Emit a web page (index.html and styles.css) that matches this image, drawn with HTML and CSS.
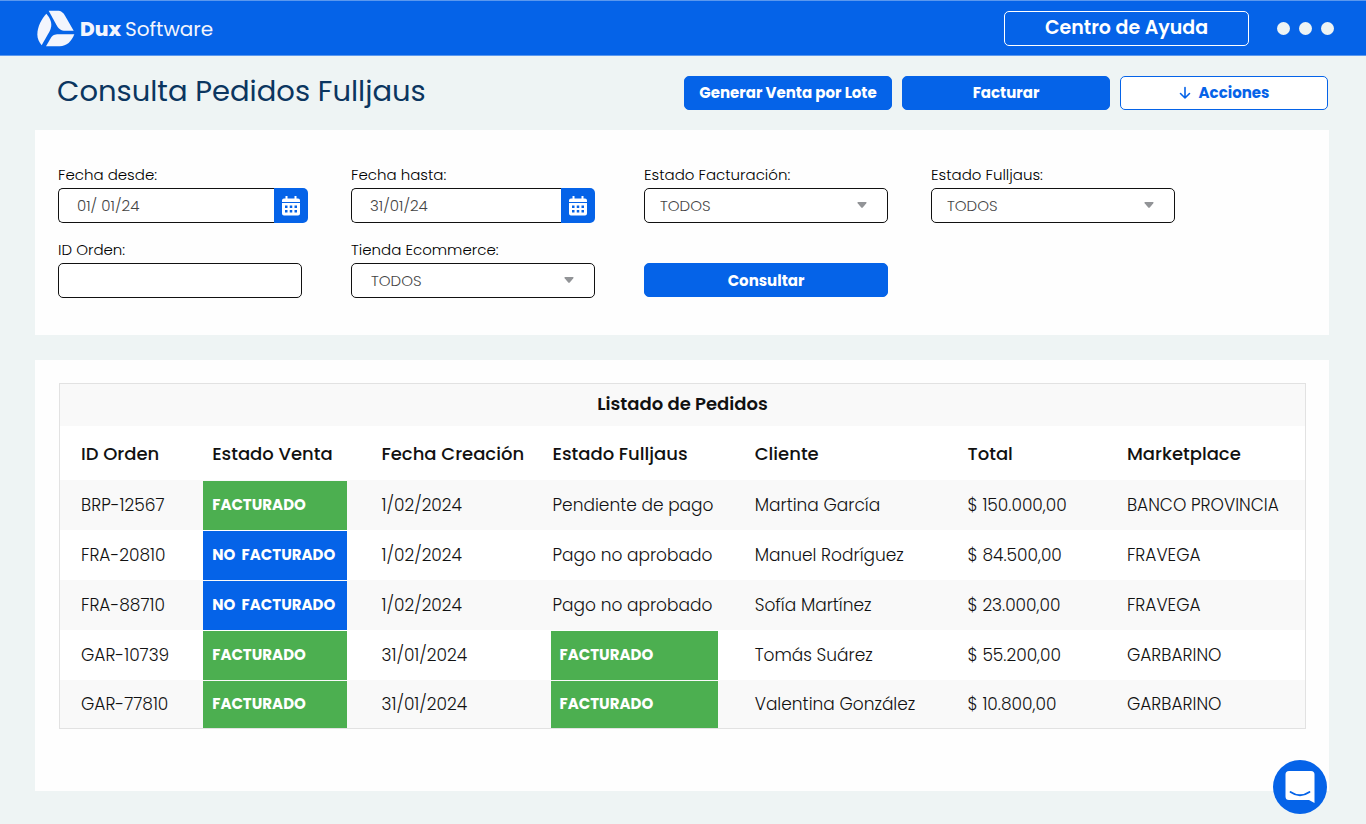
FILE: index.html
```html
<!DOCTYPE html>
<html lang="es">
<head>
<meta charset="utf-8">
<meta name="viewport" content="width=device-width, initial-scale=1">
<title>Consulta Pedidos Fulljaus</title>
<link rel="stylesheet" href="styles.css">
</head>
<body>
<header class="topbar">
  <a class="brand" href="#" aria-label="Dux Software">
    <svg class="brand-mark" viewBox="110 28 114 110" aria-hidden="true">
      <path d="M138 39C152 55 158 72 148 91L124 133C116 124 111 113 111 101C111 78 124 54 138 39Z"/>
      <path d="M145 30H171C183 30 189 36 195 46L220 90H196C181 90 175 84 168 72Z"/>
      <path d="M222 100C214 121 199 136 178 136H137L151 112C157 102 163 100 174 100Z"/>
    </svg>
    <span class="brand-name"><strong>Dux</strong><span>Software</span></span>
  </a>
  <div class="topbar-actions">
    <button class="help" type="button">Centro de Ayuda</button>
    <button class="more" type="button" aria-label="Más opciones"><i></i><i></i><i></i></button>
  </div>
</header>
<main class="page">
  <div class="page-head">
    <h1>Consulta Pedidos Fulljaus</h1>
    <div class="page-actions">
      <button class="btn" type="button">Generar Venta por Lote</button>
      <button class="btn" type="button">Facturar</button>
      <button class="btn btn-outline" type="button">
        <svg class="arrow" viewBox="0 0 12 14" aria-hidden="true"><path d="M6 1.5V12M1.5 7.5L6 12L10.500 7.500"/></svg>
        Acciones
      </button>
    </div>
  </div>

  <form class="card filters">
    <div class="field">
      <label for="desde">Fecha desde:</label>
      <div class="date">
        <input id="desde" type="text" value="01/ 01/24">
        <button type="button" aria-label="Elegir fecha desde"><svg viewBox="0 0 18 20" aria-hidden="true"><path class="solid" d="M3.500 0h2v2.500h7V0h2v2.500H16a2 2 0 0 1 2 2V6H0V4.500a2 2 0 0 1 2-2h1.500zM0 7h18v10.500a2 2 0 0 1-2 2H2a2 2 0 0 1-2-2z"/><path class="holes" d="M3 9.500h2.500V12H3zM7.750 9.500h2.500V12h-2.500zM12.500 9.500H15V12h-2.500zM3 14h2.500v2.500H3zM7.750 14h2.500v2.500h-2.500zM12.500 14H15v2.500h-2.500z"/></svg></button>
      </div>
    </div>
    <div class="field narrow">
      <label for="hasta">Fecha hasta:</label>
      <div class="date">
        <input id="hasta" type="text" value="31/01/24">
        <button type="button" aria-label="Elegir fecha hasta"><svg viewBox="0 0 18 20" aria-hidden="true"><path class="solid" d="M3.500 0h2v2.500h7V0h2v2.500H16a2 2 0 0 1 2 2V6H0V4.500a2 2 0 0 1 2-2h1.500zM0 7h18v10.500a2 2 0 0 1-2 2H2a2 2 0 0 1-2-2z"/><path class="holes" d="M3 9.500h2.500V12H3zM7.750 9.500h2.500V12h-2.500zM12.500 9.500H15V12h-2.500zM3 14h2.500v2.500H3zM7.750 14h2.500v2.500h-2.500zM12.500 14H15v2.500h-2.500z"/></svg></button>
      </div>
    </div>
    <div class="field">
      <label for="facturacion">Estado Facturación:</label>
      <div class="select">
        <select id="facturacion"><option>TODOS</option></select>
        <svg viewBox="0 0 10 6" aria-hidden="true"><path d="M1 0h8q1 .3.300 1.200L5.800 5.400q-.8.800-1.600 0L.7 1.200Q0 .3 1 0z"/></svg>
      </div>
    </div>
    <div class="field">
      <label for="fulljaus">Estado Fulljaus:</label>
      <div class="select">
        <select id="fulljaus"><option>TODOS</option></select>
        <svg viewBox="0 0 10 6" aria-hidden="true"><path d="M1 0h8q1 .3.300 1.200L5.800 5.400q-.8.800-1.600 0L.7 1.200Q0 .3 1 0z"/></svg>
      </div>
    </div>
    <div class="field narrow">
      <label for="orden">ID Orden:</label>
      <input id="orden" type="text">
    </div>
    <div class="field narrow">
      <label for="tienda">Tienda Ecommerce:</label>
      <div class="select wide-inset">
        <select id="tienda"><option>TODOS</option></select>
        <svg viewBox="0 0 10 6" aria-hidden="true"><path d="M1 0h8q1 .3.300 1.200L5.800 5.400q-.8.800-1.600 0L.7 1.200Q0 .3 1 0z"/></svg>
      </div>
    </div>
    <button class="btn submit" type="submit">Consultar</button>
  </form>

  <section class="card listing">
    <table>
      <colgroup><col class="c-id"><col class="c-sale"><col class="c-date"><col class="c-state"><col class="c-client"><col class="c-total"><col class="c-market"></colgroup>
      <thead>
        <tr class="table-title"><th colspan="7">Listado de Pedidos</th></tr>
        <tr class="table-head">
          <th scope="col">ID Orden</th><th scope="col">Estado Venta</th><th scope="col">Fecha Creación</th><th scope="col">Estado Fulljaus</th><th scope="col">Cliente</th><th scope="col">Total</th><th scope="col">Marketplace</th>
        </tr>
      </thead>
      <tbody>
        <tr><td>BRP-12567</td><td><span class="tag done">FACTURADO</span></td><td>1/02/2024</td><td>Pendiente de pago</td><td>Martina García</td><td>$ 150.000,00</td><td>BANCO PROVINCIA</td></tr>
        <tr><td>FRA-20810</td><td><span class="tag open">NO&nbsp; FACTURADO</span></td><td>1/02/2024</td><td>Pago no aprobado</td><td>Manuel Rodríguez</td><td>$ 84.500,00</td><td>FRAVEGA</td></tr>
        <tr><td>FRA-88710</td><td><span class="tag open">NO&nbsp; FACTURADO</span></td><td>1/02/2024</td><td>Pago no aprobado</td><td>Sofía Martínez</td><td>$ 23.000,00</td><td>FRAVEGA</td></tr>
        <tr><td>GAR-10739</td><td><span class="tag done">FACTURADO</span></td><td>31/01/2024</td><td class="flush"><span class="tag done">FACTURADO</span></td><td>Tomás Suárez</td><td>$ 55.200,00</td><td>GARBARINO</td></tr>
        <tr><td>GAR-77810</td><td><span class="tag done">FACTURADO</span></td><td>31/01/2024</td><td class="flush"><span class="tag done">FACTURADO</span></td><td>Valentina González</td><td>$ 10.800,00</td><td>GARBARINO</td></tr>
      </tbody>
    </table>
  </section>
</main>
<button class="chat" type="button" aria-label="Abrir chat">
  <svg viewBox="0 0 54 54" aria-hidden="true"><path class="bubble" d="M16 11h22q3.500 0 3.500 3.500V43L36 40H16q-3.500 0-3.500-3.500v-22Q12.500 11 16 11z"/><path class="smile" d="M17.500 32Q27 38.500 36.500 32"/></svg>
</button>
</body>
</html>
```

FILE: styles.css
```css
:root {
  --blue: #0563e8;
  --navy: #0b3660;
  --green: #4caf50;
  --ground: #eef4f4;
}

* { box-sizing: border-box; }

body {
  margin: 0;
  min-height: 100vh;
  background: var(--ground);
  color: #111;
  font-family: Poppins, Inter, sans-serif;
  font-size: 16px;
}

button, input, select { font: inherit; }
button { cursor: pointer; }

.topbar {
  display: flex;
  align-items: center;
  justify-content: space-between;
  height: 56px;
  padding: 0 32px 0 37px;
  background: var(--blue);
  border-top: 1px solid #5b98ee;
  border-bottom: 1px solid #5b98ee;
}

.brand {
  display: flex;
  align-items: center;
  gap: 5px;
  color: #f3f5fd;
  text-decoration: none;
}
.brand-mark { width: 38px; height: 37px; fill: currentColor; }
.brand-name {
  display: flex;
  align-items: baseline;
  gap: 4px;
  padding-top: 2px;
  font-size: 20px;
  font-weight: 400;
}
.brand-name strong { font-weight: 800; }

.topbar-actions { display: flex; align-items: center; gap: 28px; }
.help {
  width: 245px;
  height: 35px;
  padding: 0 0 2px;
  border: 1px solid #fff;
  border-radius: 5px;
  background: none;
  color: #fff;
  font-size: 19px;
  font-weight: 600;
}
.more {
  display: flex;
  gap: 9px;
  padding: 0;
  border: 0;
  background: none;
}
.more i { width: 13px; height: 13px; border-radius: 50%; background: var(--ground); }

.page { padding: 0 37px 33px 35px; }

.page-head {
  display: flex;
  align-items: center;
  justify-content: space-between;
  height: 74px;
  padding: 0 1px 0 22px;
}
h1 {
  margin: 0;
  padding-bottom: 4px;
  color: var(--navy);
  font-size: 29px;
  font-weight: 400;
}
.page-actions { display: flex; gap: 10px; }

.btn {
  display: flex;
  align-items: center;
  justify-content: center;
  gap: 8px;
  height: 34px;
  padding: 0;
  border: 1px solid var(--blue);
  border-radius: 5px;
  background: var(--blue);
  color: #fff;
  font-size: 15px;
  font-weight: 700;
}
.page-actions .btn { width: 208px; padding-bottom: 1px; }
.btn.btn-outline { background: #fff; color: var(--blue); }
.arrow {
  width: 12px;
  height: 14px;
  fill: none;
  stroke: currentColor;
  stroke-width: 1.6;
  stroke-linecap: round;
  stroke-linejoin: round;
}

.card { background: #fefefe; }

.filters {
  display: grid;
  grid-template-columns: 250fr 250fr 244fr 244fr;
  column-gap: 43px;
  row-gap: 15px;
  align-items: end;
  padding: 33px 154px 37px 23px;
}
.field { display: flex; flex-direction: column; }
.field.narrow { margin-right: 6px; }
.field label {
  height: 25px;
  color: #000;
  font-size: 15px;
  font-weight: 300;
  line-height: 24px;
}
.field input, .field select {
  width: 100%;
  height: 35px;
  padding: 0 18px;
  border: 1px solid #111;
  border-radius: 5px;
  background: #fff;
  color: #444;
  font-size: 15px;
  font-weight: 300;
}
.date { display: flex; }
.date input {
  flex: 1;
  min-width: 0;
  border-right: 0;
  border-radius: 5px 0 0 5px;
}
.date button {
  display: flex;
  align-items: center;
  justify-content: center;
  width: 34px;
  padding: 0;
  border: 0;
  border-radius: 0 5px 5px 0;
  background: var(--blue);
}
.date svg { width: 18px; height: 20px; }
.solid { fill: #fff; }
.holes { fill: var(--blue); }

.select { position: relative; }
.select select { padding: 0 15px; appearance: none; }
.select svg {
  position: absolute;
  top: 14px;
  right: 21px;
  width: 10px;
  height: 6px;
  fill: #929497;
  pointer-events: none;
}
.wide-inset select { padding: 0 19px; }
.submit { margin-bottom: 1px; }

.listing { margin-top: 25px; padding: 23px 23px 62px 24px; }

table {
  width: 100%;
  table-layout: fixed;
  border: 1px solid #e2e2e2;
  border-spacing: 0;
  background: #fff;
}
.c-id { width: 11.5%; }
.c-sale { width: 13.6%; }
.c-date { width: 14.3%; }
.c-state { width: 16.4%; }
.c-client { width: 17.1%; }
.c-total { width: 12.8%; }
.c-market { width: 14.3%; }

th, td { padding: 0; text-align: left; white-space: nowrap; }
th { font-size: 18px; font-weight: 500; }
.table-title { height: 42px; background: #f9f9f9; }
.table-title th { padding-bottom: 3px; font-weight: 600; text-align: center; }
.table-head { height: 54px; }
tbody tr { height: 50px; }
tbody tr:last-child { height: 48px; }
tbody tr:nth-child(odd) { background: #f9f9f9; }
td { font-size: 17px; font-weight: 300; }

.table-head th:first-child, td:first-child { padding-left: 21px; }
.table-head th:nth-child(2), .table-head th:nth-child(3), td:nth-child(3) { padding-left: 9px; }
.table-head th:nth-child(4), td:nth-child(4) { padding-left: 2px; }
td.flush:nth-child(4) { padding-left: 0; }

.tag {
  display: flex;
  align-items: center;
  width: 85%;
  height: 49px;
  padding: 0 0 1px 9px;
  color: #fff;
  font-size: 15px;
  font-weight: 700;
}
.flush .tag { width: 82%; }
tbody tr:last-child .tag { height: 47px; }
.done { background: var(--green); }
.open { background: var(--blue); }

.chat {
  position: fixed;
  right: 39px;
  bottom: 10px;
  width: 54px;
  height: 54px;
  padding: 0;
  border: 0;
  border-radius: 50%;
  background: var(--blue);
}
.chat svg { display: block; width: 100%; height: 100%; }
.bubble { fill: #fff; }
.smile { fill: none; stroke: var(--blue); stroke-width: 1.8; stroke-linecap: round; }
```
